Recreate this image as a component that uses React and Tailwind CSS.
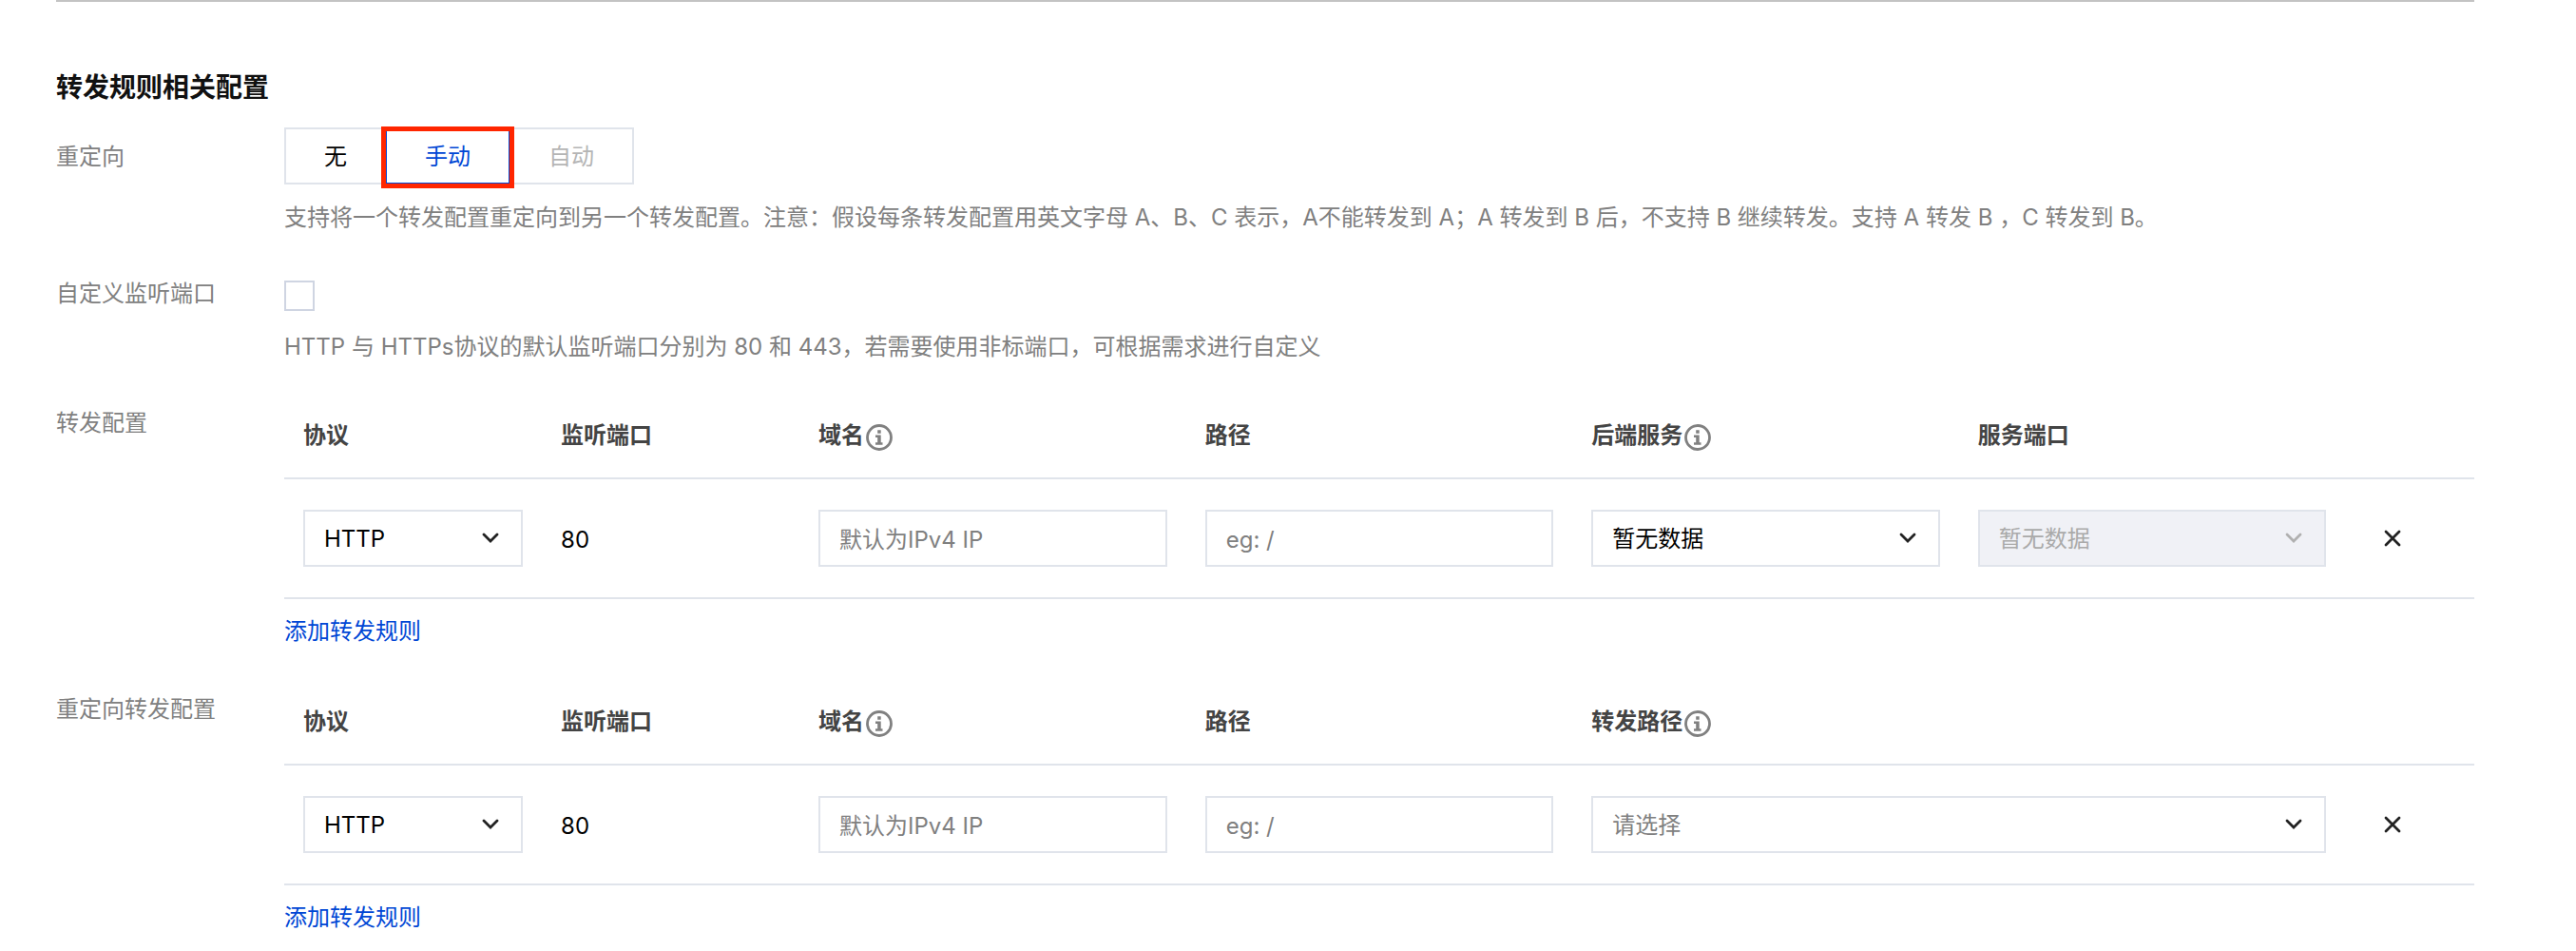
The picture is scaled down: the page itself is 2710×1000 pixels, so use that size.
import React, { useState } from 'react';

const InfoIcon = () => (
  <svg className="ml-0.5 mt-1 h-7 w-7 shrink-0 text-[#808080]" viewBox="0 0 28 28" fill="none" aria-hidden="true">
    <circle cx="14" cy="14" r="12.5" stroke="currentColor" strokeWidth="2.8" />
    <path d="M12.2 6.2h3.5v3.5h-3.5zM10 11.5h5.7v7.8h1.8v2.5H10v-2.5h2.2V14H10z" fill="currentColor" />
  </svg>
);

const Arrow = ({ disabled }) => (
  <svg
    className={`pointer-events-none absolute right-6 top-1/2 h-5 w-5 -translate-y-1/2 ${disabled ? "text-[#b0b0b0]" : "text-[#222]"}`}
    viewBox="0 0 20 20"
    fill="none"
    aria-hidden="true"
  >
    <path d="M3 6l7 7 7-7" stroke="currentColor" strokeWidth="2.8" strokeLinecap="round" />
  </svg>
);

const Select = ({ label, options, disabled = false, placeholder = false }) => {
  let color = "bg-white text-black";
  if (disabled) color = "bg-[#f0f1f6] text-[#aaa]";
  else if (placeholder) color = "bg-white text-[#808080]";
  return (
    <div className="relative">
      <select
        aria-label={label}
        disabled={disabled}
        className={`block h-[60px] w-full appearance-none rounded-none border-2 border-[#e0e4eb] pl-5 pr-14 pt-0.5 opacity-100 outline-none ${color}`}
      >
        {options.map((o) => <option key={o}>{o}</option>)}
      </select>
      <Arrow disabled={disabled} />
    </div>
  );
};

const TextInput = ({ label, placeholder }) => (
  <input
    type="text"
    aria-label={label}
    placeholder={placeholder}
    className="block h-[60px] w-full border-2 border-[#e0e4eb] bg-white px-5 pt-0.5 outline-none placeholder:text-[#808080]"
  />
);

const Row = ({ label, htmlFor, labelClass = "", className = "", children }) => (
  <div className={`flex ${className}`}>
    <div className={`w-60 shrink-0 text-[#808080] ${labelClass}`}>
      {htmlFor ? <label htmlFor={htmlFor}>{label}</label> : label}
    </div>
    <div className="min-w-0 flex-1">{children}</div>
  </div>
);

const Th = ({ children, info, span }) => (
  <th scope="col" colSpan={span} className="px-5 text-left font-semibold text-[#444]">
    <div className="flex items-center">
      {children}
      {info && <InfoIcon />}
    </div>
  </th>
);

// merged = the last two field columns are one wide "转发路径" column
const RuleTable = ({ merged = false }) => (
  <>
    <table className="w-full table-fixed border-collapse">
      <colgroup>
        <col className="w-2/17" />
        <col className="w-2/17" />
        <col className="w-3/17" />
        <col className="w-3/17" />
        <col className="w-3/17" />
        <col className="w-3/17" />
        <col className="w-1/17" />
      </colgroup>
      <thead>
        <tr className="h-[90px] border-b-2 border-[#e0e4eb]">
          <Th>协议</Th>
          <Th>监听端口</Th>
          <Th info>域名</Th>
          <Th>路径</Th>
          {merged ? <Th info span={2}>转发路径</Th> : (
            <>
              <Th info>后端服务</Th>
              <Th>服务端口</Th>
            </>
          )}
          <td></td>
        </tr>
      </thead>
      <tbody>
        <tr className="h-[126px] border-b-2 border-[#e0e4eb] text-black">
          <td className="px-5"><Select label="协议" options={["HTTP", "HTTPS"]} /></td>
          <td className="px-5 pt-1">80</td>
          <td className="px-5"><TextInput label="域名" placeholder="默认为IPv4 IP" /></td>
          <td className="px-5"><TextInput label="路径" placeholder="eg: /" /></td>
          {merged ? (
            <td className="px-5" colSpan={2}><Select label="转发路径" options={["请选择"]} placeholder /></td>
          ) : (
            <>
              <td className="px-5"><Select label="后端服务" options={["暂无数据"]} /></td>
              <td className="px-5"><Select label="服务端口" options={["暂无数据"]} disabled /></td>
            </>
          )}
          <td className="px-5">
            <button type="button" aria-label="删除" className="flex h-8 w-15 items-center justify-center">
              <svg className="h-5 w-5 text-[#222]" viewBox="0 0 20 20" fill="none" aria-hidden="true">
                <path d="M3 3l14 14M17 3L3 17" stroke="currentColor" strokeWidth="2.8" strokeLinecap="round" />
              </svg>
            </button>
          </td>
        </tr>
      </tbody>
    </table>
    <a href="#add" className="mt-4 block w-fit text-[#0047d5]">添加转发规则</a>
  </>
);

export default function App() {
  const [mode, setMode] = useState("手动");
  const [custom, setCustom] = useState(false);

  return (
    <main className="min-h-screen bg-white pl-[59px] pr-[107px] font-['Inter','Noto_Sans_CJK_SC',sans-serif] text-[24px] leading-9">
      <hr className="border-t-2 border-[#c3c3c3]" />
      <h2 className="mt-[70px] text-[28px] font-bold leading-10 text-[#111]">转发规则相关配置</h2>

      <Row label="重定向" labelClass="pt-[13px]" className="mt-[22px]">
        <div className="flex">
          {["无", "手动", "自动"].map((name) => (
            <div key={name} className="relative -mr-0.5">
              <button
                type="button"
                disabled={name === "自动"}
                onClick={() => setMode(name)}
                className={`relative h-[60px] border-2 px-10 pt-0.5 ${
                  name === mode
                    ? "z-10 border-[#0047d5] text-[#0047d5]"
                    : name === "自动"
                      ? "border-[#e0e4eb] text-[#b5b5b5]"
                      : "border-[#e0e4eb] text-black"
                }`}
              >
                {name}
              </button>
              {name === "手动" && (
                <span className="pointer-events-none absolute -inset-x-1 -top-px -bottom-1 z-20 border-[5px] border-[#ff2600]" />
              )}
            </div>
          ))}
        </div>
        <p className="mt-[17px] text-[#808080]">
          支持将一个转发配置重定向到另一个转发配置。注意：假设每条转发配置用英文字母 A、B、C 表示，A不能转发到 A；A 转发到 B 后，不支持 B 继续转发。支持 A 转发 B ，C 转发到 B。
        </p>
      </Row>

      <Row label="自定义监听端口" htmlFor="custom-port" labelClass="pt-px" className="mt-[43px]">
        <input
          id="custom-port"
          type="checkbox"
          checked={custom}
          onChange={(e) => setCustom(e.target.checked)}
          className="mt-[5px] block h-8 w-8 appearance-none border-2 border-[#cfd5e2] checked:bg-[#0047d5]"
        />
        <p className="mt-5 text-[#808080]">
          HTTP 与 HTTPs协议的默认监听端口分别为 80 和 443，若需要使用非标端口，可根据需求进行自定义
        </p>
      </Row>

      <Row label="转发配置" labelClass="pt-3.5" className="mt-[30px]">
        <RuleTable />
      </Row>

      <Row label="重定向转发配置" labelClass="pt-3.5" className="mt-8">
        <RuleTable merged />
      </Row>
    </main>
  );
}
